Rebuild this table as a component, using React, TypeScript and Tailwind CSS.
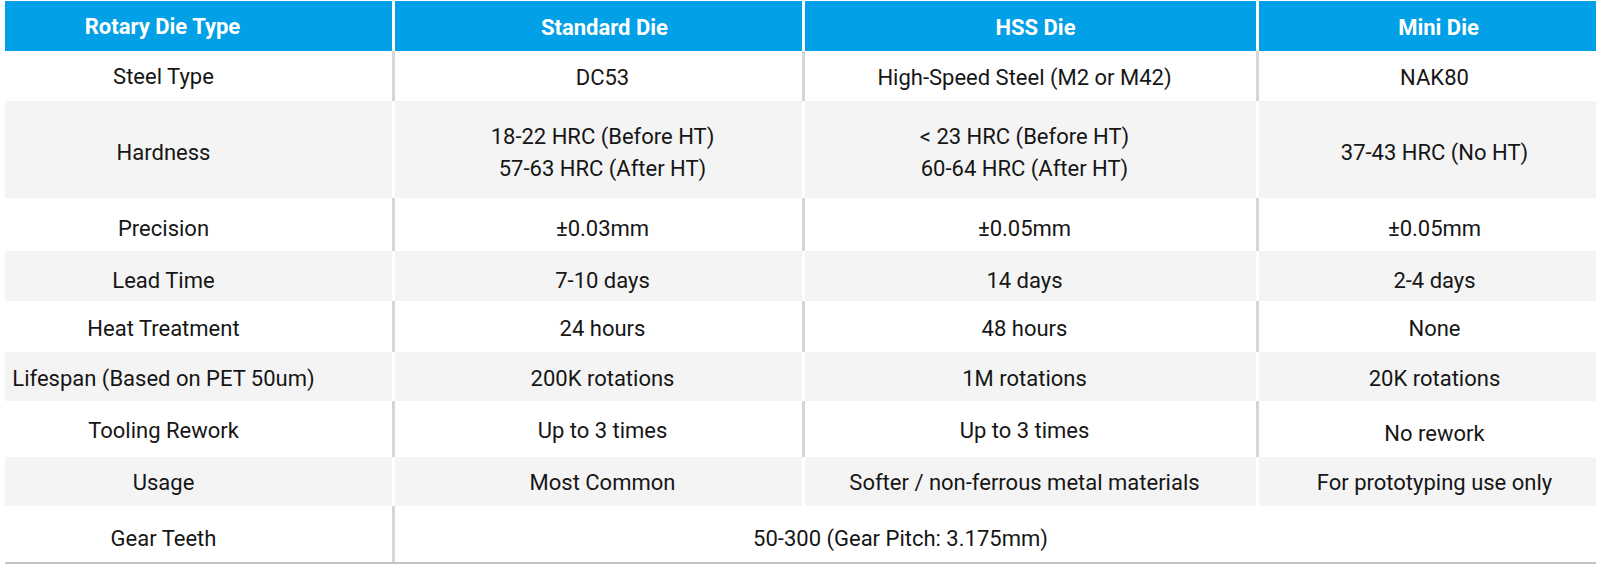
const header = ["Rotary Die Type", "Standard Die", "HSS Die", "Mini Die"];
// nudges so the text sits where the source page had it
const headPad = ["pr-[72px] pt-px", "pl-[12px] pt-[4px]", "pl-[10px] pt-[4px]", "pl-[22px] pt-[4px]"];
const cellPad = ["pr-[70px]", "pl-[8px]", "pr-[12px]", "pl-[14px]"];

const rows: { cells: string[][]; h: string; shade: boolean; pt: string[] }[] = [
  {
    cells: [["Steel Type"], ["DC53"], ["High-Speed Steel (M2 or M42)"], ["NAK80"]],
    h: "h-[50px]",
    shade: false,
    pt: ["pt-[2px]", "pt-[4px]", "pt-[4px]", "pt-[4px]"],
  },
  {
    cells: [
      ["Hardness"],
      ["18-22 HRC (Before HT)", "57-63 HRC (After HT)"],
      ["< 23 HRC (Before HT)", "60-64 HRC (After HT)"],
      ["37-43 HRC (No HT)"],
    ],
    h: "h-[97px]",
    shade: true,
    pt: ["pt-[6px]", "pt-[6px]", "pt-[6px]", "pt-[6px]"],
  },
  {
    cells: [["Precision"], ["±0.03mm"], ["±0.05mm"], ["±0.05mm"]],
    h: "h-[53px]",
    shade: false,
    pt: ["pt-[8px]", "pt-[8px]", "pt-[8px]", "pt-[8px]"],
  },
  {
    cells: [["Lead Time"], ["7-10 days"], ["14 days"], ["2-4 days"]],
    h: "h-[50px]",
    shade: true,
    pt: ["pt-[9px]", "pt-[9px]", "pt-[9px]", "pt-[9px]"],
  },
  {
    cells: [["Heat Treatment"], ["24 hours"], ["48 hours"], ["None"]],
    h: "h-[51px]",
    shade: false,
    pt: ["pt-[4px]", "pt-[4px]", "pt-[4px]", "pt-[4px]"],
  },
  {
    cells: [["Lifespan (Based on PET 50um)"], ["200K rotations"], ["1M rotations"], ["20K rotations"]],
    h: "h-[49px]",
    shade: true,
    pt: ["pt-[4px]", "pt-[4px]", "pt-[4px]", "pt-[4px]"],
  },
  {
    cells: [["Tooling Rework"], ["Up to 3 times"], ["Up to 3 times"], ["No rework"]],
    h: "h-[56px]",
    shade: false,
    pt: ["pt-[4px]", "pt-[4px]", "pt-[4px]", "pt-[10px]"],
  },
  {
    cells: [["Usage"], ["Most Common"], ["Softer / non-ferrous metal materials"], ["For prototyping use only"]],
    h: "h-[49px]",
    shade: true,
    pt: ["pt-[3px]", "pt-[3px]", "pt-[3px]", "pt-[3px]"],
  },
];

const grid = "grid grid-cols-[387px_410px_454px_340px]";

export default function App() {
  return (
    <div className="w-[1600px] h-[570px] bg-white pt-px pl-[5px]" style={{ fontFamily: "Roboto, sans-serif" }}>
      <div className="w-[1591px] text-[22px] leading-[32px] text-[#161616]">
        {/* header */}
        <div className={`${grid} h-[50px]`}>
          {header.map((t, i) => (
            <div
              key={t}
              className={`flex items-center justify-center bg-[#02a0e6] font-bold text-white ${headPad[i]} ${
                i > 0 ? "border-l-[3px] border-white" : ""
              }`}
            >
              {t}
            </div>
          ))}
        </div>

        {rows.map((r) => (
          <div key={r.cells[0][0]} className={`${grid} ${r.h}`}>
            {r.cells.map((c, i) => (
              <div
                key={i}
                className={`flex flex-col items-center justify-center whitespace-nowrap text-center ${cellPad[i]} ${
                  r.pt[i]
                } ${r.shade ? "bg-[#f4f4f4]" : "bg-white"} ${
                  i > 0 ? (r.shade ? "border-l-[3px] border-white" : "border-l-[3px] border-[#d6d6d6]") : ""
                }`}
              >
                {c.map((line) => (
                  <span key={line}>{line}</span>
                ))}
              </div>
            ))}
          </div>
        ))}

        {/* gear teeth */}
        <div className={`${grid} h-[58px] border-b-2 border-[#c4c4c4]`}>
          <div className="flex items-center justify-center pr-[70px] pt-[10px]">Gear Teeth</div>
          <div className="col-span-3 flex items-center justify-center border-l-[3px] border-[#d6d6d6] pr-[190px] pt-[10px]">
            50-300 (Gear Pitch: 3.175mm)
          </div>
        </div>
      </div>
    </div>
  );
}
